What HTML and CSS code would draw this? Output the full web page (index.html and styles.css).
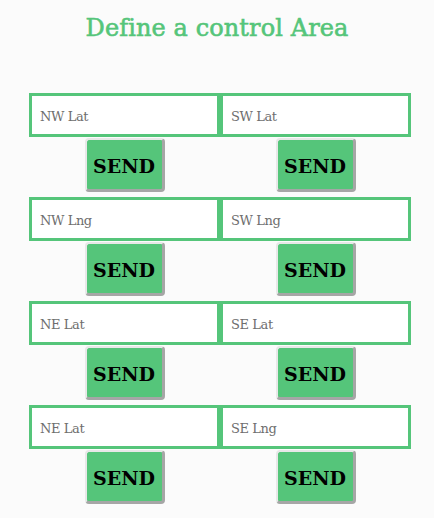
FILE: index.html
```html
<!DOCTYPE html>
<html>
<head>
<meta charset="utf-8">
<link rel="stylesheet" href="styles.css">
</head>
<body>
<h1 class="title">Define a control Area</h1>
<div class="grid">
  <div class="cell"><input class="field" placeholder="NW Lat"><button class="send">SEND</button></div>
  <div class="cell"><input class="field" placeholder="SW Lat"><button class="send">SEND</button></div>
  <div class="cell"><input class="field" placeholder="NW Lng"><button class="send">SEND</button></div>
  <div class="cell"><input class="field" placeholder="SW Lng"><button class="send">SEND</button></div>
  <div class="cell"><input class="field" placeholder="NE Lat"><button class="send">SEND</button></div>
  <div class="cell"><input class="field" placeholder="SE Lat"><button class="send">SEND</button></div>
  <div class="cell"><input class="field" placeholder="NE Lat"><button class="send">SEND</button></div>
  <div class="cell"><input class="field" placeholder="SE Lng"><button class="send">SEND</button></div>
</div>
</body>
</html>
```
FILE: styles.css
```css
html, body {
  margin: 0;
  padding: 0;
  background: #fbfbfb;
  font-family: "DejaVu Serif", serif;
}
.title {
  margin: 0;
  padding-top: 12px;
  height: 93px;
  box-sizing: border-box;
  text-align: center;
  color: #55c57a;
  font-weight: normal;
  font-size: 24px;
  letter-spacing: 0.1px;
  line-height: 32px;
  -webkit-text-stroke: 0.6px #55c57a;
}
.grid {
  display: grid;
  grid-template-columns: 1fr 1fr;
  width: 382px;
  margin-left: 29px;
}
.cell {
  display: flex;
  flex-direction: column;
  align-items: center;
  padding-bottom: 5px;
}
.field {
  width: 100%;
  height: 44px;
  box-sizing: border-box;
  border: 3px solid #55c57a;
  background: #fff;
  padding: 3px 0 0 8px;
  font-family: inherit;
  font-size: 13px;
  letter-spacing: -0.4px;
  outline: none;
}
.field::placeholder {
  color: #6e6e6e;
}
.send {
  margin-top: 1px;
  width: 80px;
  height: 54px;
  box-sizing: border-box;
  background: #55c57a;
  border: 2px solid;
  border-color: #e8e8e8 #a6a6a6 #a6a6a6 #e8e8e8;
  border-width: 2px 3px 3px 2px;
  border-radius: 4px;
  color: #000;
  font-family: inherit;
  font-size: 19px;
  letter-spacing: 0;
  font-weight: bold;
  padding: 2px 0 0;
}
```
